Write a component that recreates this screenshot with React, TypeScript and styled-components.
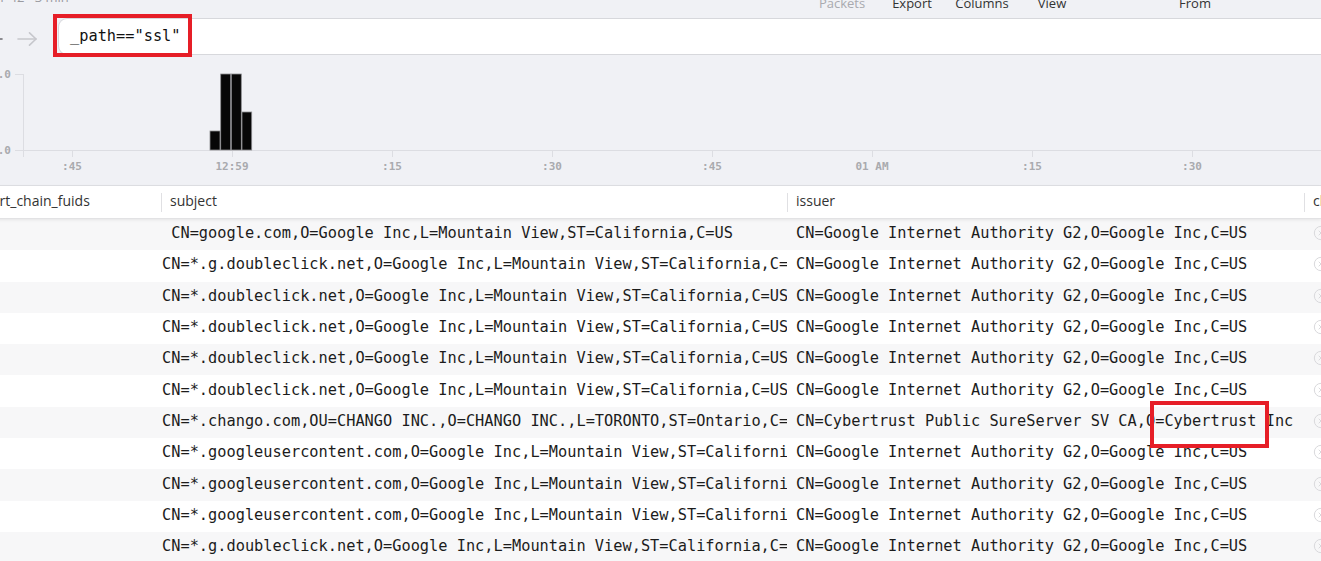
import React from "react";
import styled, { createGlobalStyle } from "styled-components";
import { CircleX } from "lucide-react";

const MONO = `"DejaVu Sans Mono", "Liberation Mono", monospace`;
const SANS = `"Open Sans", "Noto Sans", sans-serif`;
const COLS = "185px 626px 517px 1fr";

const GlobalStyle = createGlobalStyle`
  html, body { margin: 0; padding: 0; background: #fff; }
  body { font-family: ${SANS}; }
  * { box-sizing: border-box; }
`;

const Page = styled.div`
  position: relative;
  width: 1321px;
  height: 561px;
  overflow: hidden;
  background: #fff;
`;

const Toolbar = styled.div`
  display: grid;
  grid-template-columns: 807px repeat(4, 70px) 73px 70px 1fr;
  height: 18px;
  background: #f0f1f5;
  overflow: hidden;
`;

const Status = styled.div`
  font-size: 13px;
  line-height: 18px;
  margin-top: -12px;
  margin-left: -2px;
  color: #9a9aa0;
  white-space: nowrap;
`;

const ToolLabel = styled.div<{ $muted?: boolean }>`
  font-size: 13px;
  line-height: 18px;
  margin-top: -6px;
  text-align: center;
  white-space: nowrap;
  color: ${(p) => (p.$muted ? "#a9aaaf" : "#333")};
`;

const SearchRow = styled.div`
  display: flex;
  align-items: stretch;
  height: 37px;
  background: #f0f1f5;
`;

const NavGroup = styled.div`
  display: flex;
  align-items: center;
  gap: 14px;
  margin-left: -17px;
  padding-top: 4px;
  margin-right: 21px;
`;

const SearchInput = styled.div`
  flex: 1;
  display: flex;
  align-items: center;
  background: #fff;
  border: 1px solid #d7d8dc;
  border-right: none;
  border-radius: 9px 0 0 9px;
  padding-left: 11px;
  padding-bottom: 1px;
  font-family: ${MONO};
  font-size: 15.3px;
  color: #111;
  white-space: pre;
`;

const ChartBox = styled.div`
  height: 131px;
  background: #f0f1f5;
  border-bottom: 1px solid #dfe0e4;
`;

const Table = styled.div`
  margin-left: -24px;
`;

const HeaderRow = styled.div`
  position: relative;
  z-index: 1;
  display: grid;
  grid-template-columns: ${COLS};
  height: 33px;
  background: #fff;
  border-bottom: 1px solid #e2e2e4;
  box-shadow: 0 1px 3px rgba(0, 0, 0, 0.08);
`;

const HeaderCell = styled.div`
  display: flex;
  align-items: center;
  gap: 8px;
  overflow: hidden;
  white-space: nowrap;
  padding-bottom: 3px;
  font-family: ${SANS};
  font-size: 14px;
  color: #333;
`;

const Sep = styled.span`
  flex: none;
  width: 1px;
  height: 19px;
  margin-top: 3px;
  background: #e0e0e3;
`;

const Row = styled.div<{ $alt: boolean }>`
  display: grid;
  grid-template-columns: ${COLS};
  height: 31.3px;
  background: ${(p) => (p.$alt ? "#f7f7f8" : "#fff")};
`;

const Cell = styled.div<{ $pad: number }>`
  display: flex;
  align-items: center;
  overflow: hidden;
  white-space: pre;
  padding-left: ${(p) => p.$pad}px;
  padding-bottom: 3px;
  font-family: ${MONO};
  font-size: 15.3px;
  color: #1c1c1c;

  svg {
    flex: none;
  }
`;

const Annotation = styled.div<{ $x: number; $y: number; $w: number; $h: number }>`
  position: absolute;
  left: ${(p) => p.$x}px;
  top: ${(p) => p.$y}px;
  width: ${(p) => p.$w}px;
  height: ${(p) => p.$h}px;
  border: 4px solid #e61e27;
  pointer-events: none;
`;

const Arrow = ({ dir, color }: { dir: "left" | "right"; color: string }) => (
  <svg width="20" height="14" viewBox="0 0 20 14" fill="none">
    <g
      stroke={color}
      strokeWidth="1.6"
      strokeLinecap="round"
      strokeLinejoin="round"
      transform={dir === "left" ? "translate(20 0) scale(-1 1)" : undefined}
    >
      <path d="M1 7 H19" />
      <path d="M12.5 0.8 L19 7 L12.5 13.2" />
    </g>
  </svg>
);

const ticks = [
  { x: 72, t: ":45" },
  { x: 232, t: "12:59" },
  { x: 392, t: ":15" },
  { x: 552, t: ":30" },
  { x: 712, t: ":45" },
  { x: 872, t: "01 AM" },
  { x: 1032, t: ":15" },
  { x: 1192, t: ":30" },
];

const bars = [
  { x: 210, y: 76, w: 10 },
  { x: 220.7, y: 19, w: 10 },
  { x: 231.3, y: 19, w: 10 },
  { x: 242, y: 57, w: 9.7 },
];

const Chart = () => (
  <svg width="1321" height="130" viewBox="0 0 1321 130">
    <g stroke="#dcdde2" strokeWidth="1">
      <line x1="23.5" y1="19" x2="23.5" y2="102" />
      <line x1="15" y1="19.5" x2="23.5" y2="19.5" />
      <line x1="15" y1="95.5" x2="1321" y2="95.5" />
      {ticks.map((k) => (
        <line key={k.x} x1={k.x + 0.5} y1="95" x2={k.x + 0.5} y2="102" />
      ))}
    </g>
    <g fontFamily={MONO} fontSize="11" fontWeight="700" fill="#a9aaae">
      <text x="11" y="23" textAnchor="end">1.0</text>
      <text x="11" y="99" textAnchor="end">0.0</text>
      {ticks.map((k) => (
        <text key={k.x} x={k.x} y="114.5" textAnchor="middle">
          {k.t}
        </text>
      ))}
    </g>
    {bars.map((b) => (
      <rect
        key={b.x}
        x={b.x}
        y={b.y}
        width={b.w}
        height={95 - b.y}
        fill="#070707"
        stroke="#8d8d90"
        strokeWidth="0.8"
      />
    ))}
  </svg>
);

const G_ISSUER = "CN=Google Internet Authority G2,O=Google Inc,C=US";
const GDC = "CN=*.g.doubleclick.net,O=Google Inc,L=Mountain View,ST=California,C=US";
const DC = "CN=*.doubleclick.net,O=Google Inc,L=Mountain View,ST=California,C=US";
const GUC = "CN=*.googleusercontent.com,O=Google Inc,L=Mountain View,ST=California,C=US";

const rows: { subject: string; issuer: string }[] = [
  { subject: " CN=google.com,O=Google Inc,L=Mountain View,ST=California,C=US", issuer: G_ISSUER },
  { subject: GDC, issuer: G_ISSUER },
  { subject: DC, issuer: G_ISSUER },
  { subject: DC, issuer: G_ISSUER },
  { subject: DC, issuer: G_ISSUER },
  { subject: DC, issuer: G_ISSUER },
  {
    subject: "CN=*.chango.com,OU=CHANGO INC.,O=CHANGO INC.,L=TORONTO,ST=Ontario,C=CA",
    issuer: "CN=Cybertrust Public SureServer SV CA,O=Cybertrust Inc",
  },
  { subject: GUC, issuer: G_ISSUER },
  { subject: GUC, issuer: G_ISSUER },
  { subject: GUC, issuer: G_ISSUER },
  { subject: GDC, issuer: G_ISSUER },
];

export default function App() {
  return (
    <>
      <GlobalStyle />
      <Page>
        <Toolbar>
          <Status>1-42 · 3 min</Status>
          <ToolLabel $muted>Packets</ToolLabel>
          <ToolLabel>Export</ToolLabel>
          <ToolLabel>Columns</ToolLabel>
          <ToolLabel>View</ToolLabel>
          <span />
          <ToolLabel>From</ToolLabel>
          <span />
        </Toolbar>

        <SearchRow>
          <NavGroup>
            <Arrow dir="left" color="#6b6b70" />
            <Arrow dir="right" color="#c6c7cc" />
          </NavGroup>
          <SearchInput>_path=="ssl"</SearchInput>
        </SearchRow>

        <ChartBox>
          <Chart />
        </ChartBox>

        <Table>
          <HeaderRow>
            <HeaderCell>
              <Sep />
              cert_chain_fuids
            </HeaderCell>
            <HeaderCell>
              <Sep />
              subject
            </HeaderCell>
            <HeaderCell>
              <Sep />
              issuer
            </HeaderCell>
            <HeaderCell>
              <Sep />
              client_cert_chain_fuids
            </HeaderCell>
          </HeaderRow>
          {rows.map((r, i) => (
            <Row key={i} $alt={i % 2 === 0}>
              <Cell $pad={9} />
              <Cell $pad={1}>{r.subject}</Cell>
              <Cell $pad={9}>{r.issuer}</Cell>
              <Cell $pad={9}>
                <CircleX size={16} color="#d9d9dc" strokeWidth={1.5} />
              </Cell>
            </Row>
          ))}
        </Table>

        <Annotation $x={53} $y={14} $w={139} $h={43} />
        <Annotation $x={1150} $y={401} $w={119} $h={47} />
      </Page>
    </>
  );
}
